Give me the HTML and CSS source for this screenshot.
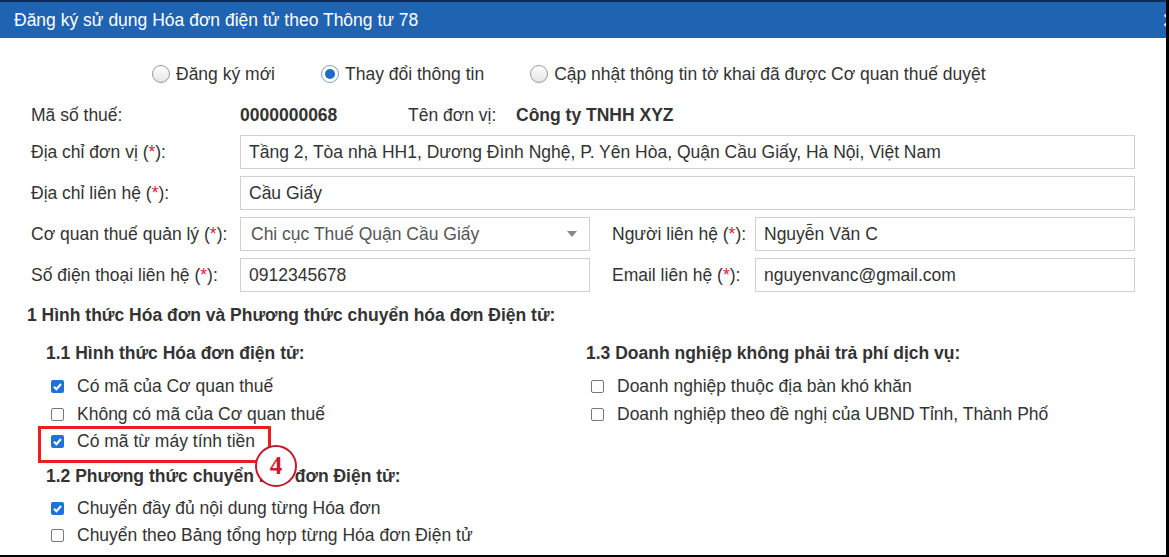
FILE: index.html
```html
<!DOCTYPE html>
<html lang="vi">
<head>
    <meta charset="UTF-8">
    <title>Đăng ký sử dụng Hóa đơn điện tử</title>
    <link rel="stylesheet" href="styles.css">
</head>
<body>
    <div class="dialog">
        <div class="dialog-header">
            <span class="dialog-title">Đăng ký sử dụng Hóa đơn điện tử theo Thông tư 78</span>
            <span class="dialog-close">×</span>
        </div>
        <div class="dialog-body">
            <div class="mode-row">
                <label class="radio"><span class="radio-dot"></span>Đăng ký mới</label>
                <label class="radio"><span class="radio-dot checked"></span>Thay đổi thông tin</label>
                <label class="radio"><span class="radio-dot"></span>Cập nhật thông tin tờ khai đã được Cơ quan thuế duyệt</label>
            </div>

            <div class="info-grid">
                <div class="field-label">Mã số thuế:</div>
                <div class="company-line">
                    <span class="tax-code">0000000068</span>
                    <span class="company-label">Tên đơn vị:</span>
                    <span class="company-name">Công ty TNHH XYZ</span>
                </div>

                <div class="field-label">Địa chỉ đơn vị (<span class="req">*</span>):</div>
                <div class="input wide">Tầng 2, Tòa nhà HH1, Dương Đình Nghệ, P. Yên Hòa, Quận Cầu Giấy, Hà Nội, Việt Nam</div>

                <div class="field-label">Địa chỉ liên hệ (<span class="req">*</span>):</div>
                <div class="input wide">Cầu Giấy</div>

                <div class="field-label">Cơ quan thuế quản lý (<span class="req">*</span>):</div>
                <div class="input select">Chi cục Thuế Quận Cầu Giấy<span class="select-arrow"></span></div>
                <div class="field-label side">Người liên hệ (<span class="req">*</span>):</div>
                <div class="input">Nguyễn Văn C</div>

                <div class="field-label">Số điện thoại liên hệ (<span class="req">*</span>):</div>
                <div class="input">0912345678</div>
                <div class="field-label side">Email liên hệ (<span class="req">*</span>):</div>
                <div class="input">nguyenvanc@gmail.com</div>
            </div>

            <div class="section-title">1 Hình thức Hóa đơn và Phương thức chuyển hóa đơn Điện tử:</div>

            <div class="section-cols">
                <div class="col-left">
                    <div class="sub-title">1.1 Hình thức Hóa đơn điện tử:</div>
                    <label class="check"><span class="box checked"><svg viewBox="0 0 13 13" width="13" height="13"><path d="M3 6.8 L5.4 9.2 L10 4" fill="none" stroke="#fff" stroke-width="2"/></svg></span>Có mã của Cơ quan thuế</label>
                    <label class="check"><span class="box"></span>Không có mã của Cơ quan thuế</label>
                    <label class="check marked"><span class="box checked"><svg viewBox="0 0 13 13" width="13" height="13"><path d="M3 6.8 L5.4 9.2 L10 4" fill="none" stroke="#fff" stroke-width="2"/></svg></span>Có mã từ máy tính tiền
                        <span class="mark-box"></span>
                        <span class="step-badge">4</span>
                    </label>
                    <div class="sub-title">1.2 Phương thức chuyển hóa đơn Điện tử:</div>
                    <label class="check"><span class="box checked"><svg viewBox="0 0 13 13" width="13" height="13"><path d="M3 6.8 L5.4 9.2 L10 4" fill="none" stroke="#fff" stroke-width="2"/></svg></span>Chuyển đầy đủ nội dung từng Hóa đơn</label>
                    <label class="check"><span class="box"></span>Chuyển theo Bảng tổng hợp từng Hóa đơn Điện tử</label>
                </div>
                <div class="col-right">
                    <div class="sub-title">1.3 Doanh nghiệp không phải trả phí dịch vụ:</div>
                    <label class="check"><span class="box"></span>Doanh nghiệp thuộc địa bàn khó khăn</label>
                    <label class="check"><span class="box"></span>Doanh nghiệp theo đề nghị của UBND Tỉnh, Thành Phố</label>
                </div>
            </div>
        </div>
    </div>
</body>
</html>
```

FILE: styles.css
```css
body {
    margin: 0;
    background-color: #000;
    font-family: 'Liberation Sans', Arial, sans-serif;
    font-size: 17.5px;
    color: #333;
}

.dialog {
    width: 1166px;
    height: 555px;
    background: white;
    overflow: hidden;
}

.dialog-header {
    height: 36px;
    border-top: 2px solid #0d2c5c;
    background-color: #1f63b3;
    color: white;
    display: flex;
    align-items: center;
    justify-content: space-between;
    padding-left: 14px;
    overflow: hidden;
}

.dialog-title {
    font-size: 17.5px;
}

.dialog-close {
    font-size: 26px;
    font-weight: bold;
    margin-right: -12px;
    line-height: 1;
}

.dialog-body {
    padding: 0 27px;
}

/* radio row */
.mode-row {
    display: flex;
    align-items: center;
    gap: 46px;
    height: 24px;
    margin-top: 24px;
    padding-left: 125px;
}

.radio {
    display: flex;
    align-items: center;
    gap: 6px;
}

.radio-dot {
    width: 16px;
    height: 16px;
    border: 1px solid #9a9a9a;
    border-radius: 50%;
    background: linear-gradient(#fff, #e4e4e4);
    position: relative;
}

.radio-dot.checked {
    border-color: #7a9fcf;
    background: #fff;
}

.radio-dot.checked::after {
    content: '';
    position: absolute;
    left: 3px;
    top: 3px;
    width: 10px;
    height: 10px;
    border-radius: 50%;
    background-color: #1f6cc6;
}

/* info grid */
.info-grid {
    display: grid;
    grid-template-columns: 209px 350px 165px 380px;
    grid-template-rows: 26px repeat(4, 34px);
    row-gap: 7px;
    margin-top: 16px;
    margin-left: 4px;
    align-items: center;
}

.field-label {
    white-space: nowrap;
}

.field-label.side {
    padding-left: 22px;
}

.req {
    color: #e0223a;
}

.company-line {
    grid-column: 2 / 5;
    display: flex;
    align-items: center;
}

.tax-code {
    width: 168px;
    font-weight: bold;
}

.company-label {
    width: 108px;
}

.company-name {
    font-weight: bold;
}

.input {
    border: 1px solid #d0d0d0;
    display: flex;
    align-items: center;
    padding-left: 8px;
    box-sizing: border-box;
    height: 34px;
    white-space: nowrap;
}

.input.wide {
    grid-column: 2 / 5;
}

.input.select {
    color: #555;
    padding-left: 10px;
    justify-content: space-between;
    padding-right: 12px;
}

.select-arrow {
    width: 0;
    height: 0;
    border-left: 5px solid transparent;
    border-right: 5px solid transparent;
    border-top: 6px solid #888;
}

/* sections */
.section-title {
    font-weight: bold;
    margin-top: 13px;
    line-height: 20px;
}

.section-cols {
    display: flex;
    padding-left: 19px;
}

.col-left {
    width: 540px;
}

.sub-title {
    font-weight: bold;
    line-height: 20px;
    margin-top: 18px;
    margin-bottom: 10px;
}

.col-left .sub-title:nth-of-type(2) {
    margin-top: 10px;
    margin-bottom: 9px;
}

.check {
    display: flex;
    align-items: center;
    gap: 13px;
    height: 27.5px;
    padding-left: 5px;
    position: relative;
}

.box {
    width: 13px;
    height: 13px;
    border: 1px solid #777;
    border-radius: 2px;
    box-sizing: border-box;
    background: white;
    display: flex;
}

.box.checked {
    border: none;
    background-color: #1f72d6;
}

.mark-box {
    position: absolute;
    left: -8px;
    top: -2px;
    width: 233px;
    height: 37px;
    border: 3px solid #ec1c24;
    box-sizing: border-box;
}

.step-badge {
    position: absolute;
    left: 209px;
    top: 17px;
    width: 42px;
    height: 42px;
    border: 2px solid #c5162f;
    border-radius: 50%;
    box-sizing: border-box;
    background: white;
    color: #d0182f;
    font-family: 'Liberation Serif', serif;
    font-weight: bold;
    font-size: 25px;
    display: flex;
    align-items: center;
    justify-content: center;
}
```
